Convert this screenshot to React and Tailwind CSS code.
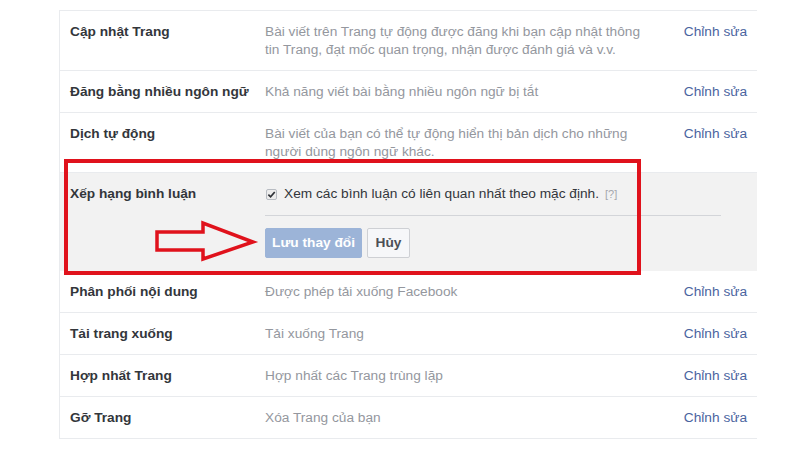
const rows = [
  {
    label: 'Cập nhật Trang',
    desc: ['Bài viết trên Trang tự động được đăng khi bạn cập nhật thông', 'tin Trang, đạt mốc quan trọng, nhận được đánh giá và v.v.'],
  },
  { label: 'Đăng bằng nhiều ngôn ngữ', desc: ['Khả năng viết bài bằng nhiều ngôn ngữ bị tắt'] },
  {
    label: 'Dịch tự động',
    desc: ['Bài viết của bạn có thể tự động hiển thị bản dịch cho những', 'người dùng ngôn ngữ khác.'],
  },
];

const rowsAfter = [
  { label: 'Phân phối nội dung', desc: ['Được phép tải xuống Facebook'] },
  { label: 'Tải trang xuống', desc: ['Tải xuống Trang'] },
  { label: 'Hợp nhất Trang', desc: ['Hợp nhất các Trang trùng lặp'] },
  { label: 'Gỡ Trang', desc: ['Xóa Trang của bạn'] },
];

function SettingRow({ label, desc }) {
  return (
    <div className="grid grid-cols-[195px_1fr_auto] border-b border-[#e9ebee] px-[10px] pb-[11px] pt-[12px] leading-[18px]">
      <div className="font-bold text-[#33363b]">{label}</div>
      <div className="text-[#94979e]">
        {desc.map((line) => (
          <div key={line}>{line}</div>
        ))}
      </div>
      <a className="text-[#4a64a0]">Chỉnh sửa</a>
    </div>
  );
}

export default function App() {
  return (
    <div
      className="relative h-[450px] w-[800px] overflow-hidden bg-white pt-[10px] text-[13.7px]"
      style={{ fontFamily: '"Liberation Sans", Arial, sans-serif' }}
    >
      <div className="ml-[59px] w-[698px] border-l border-t border-[#e9ebee]">
        {rows.map((r) => (
          <SettingRow key={r.label} {...r} />
        ))}

        {/* Expanded row */}
        <div className="grid grid-cols-[195px_1fr] bg-[#f2f2f2] px-[10px] pb-[13px] pt-[12px] leading-[18px]">
          <div className="font-bold text-[#33363b]">Xếp hạng bình luận</div>
          <div className="w-[456px]">
            <div className="flex h-[18px] items-center">
              <span className="ml-px mr-[7px] flex h-[11px] w-[11px] items-center justify-center rounded-[2px] border border-[#b8bcc2] bg-[#ececec]">
                <svg viewBox="0 0 10 10" className="h-[9px] w-[9px]">
                  <path d="M1.5 5.2 L4 7.6 L8.6 2.2" fill="none" stroke="#2f3237" strokeWidth="1.9" />
                </svg>
              </span>
              <span className="text-[#33363b]">Xem các bình luận có liên quan nhất theo mặc định.</span>
              <span className="ml-[6px] text-[11px] text-[#a4a7ad]">[?]</span>
            </div>
            <div className="mt-[12px] border-t border-[#d3d5d9]" />
            <div className="mt-[12px] flex gap-[5px]">
              <button className="h-[30px] w-[97px] rounded-[2px] border border-[#9cb4d8] bg-[#9cb4d8] font-bold text-white">
                Lưu thay đổi
              </button>
              <button className="h-[30px] w-[43px] rounded-[2px] border border-[#ced0d4] bg-[#f6f7f9] font-bold text-[#4b4f56]">
                Hủy
              </button>
            </div>
          </div>
        </div>

        {rowsAfter.map((r) => (
          <SettingRow key={r.label} {...r} />
        ))}
      </div>

      {/* Annotation: red box */}
      <div className="absolute left-[64px] top-[159px] h-[116px] w-[577px] border-[4px] border-[#e0121c]" />

      {/* Annotation: arrow */}
      <svg className="absolute left-0 top-0" width="800" height="450">
        <polygon
          points="157,232 203,232 203,223 253,242 203,259 203,250 157,250"
          fill="none"
          stroke="#e0121c"
          strokeWidth="3.5"
          strokeLinejoin="miter"
        />
      </svg>
    </div>
  );
}
